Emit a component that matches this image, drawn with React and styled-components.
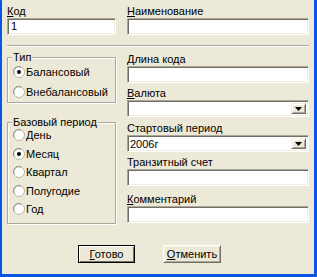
import React from "react";
import styled, { createGlobalStyle } from "styled-components";

const Global = createGlobalStyle`
  html, body { margin: 0; padding: 0; background: #ECE9D8; }
  * { box-sizing: border-box; }
`;

const Root = styled.div`
  width: 317px;
  height: 277px;
  background: #ECE9D8;
  border-left: 2px solid #0A54E6;
  border-right: 3px solid #0A54E6;
  border-bottom: 3px solid #0A54E6;
  padding: 5px 5px 0 5px;
  display: flex;
  flex-direction: column;
  font-family: "Liberation Sans", Arial, sans-serif;
  font-size: 11px;
  color: #000;
`;

const Columns = styled.div`
  display: grid;
  grid-template-columns: 109px 1fr;
  column-gap: 11px;
  align-items: start;
`;

const Column = styled.div`
  display: flex;
  flex-direction: column;
`;

const Field = styled.div`
  display: flex;
  flex-direction: column;
  margin-top: ${(p) => p.$mt || 0}px;
`;

const Label = styled.label`
  display: block;
  height: 13px;
  line-height: 13px;
  white-space: nowrap;
  u { text-decoration: underline; }
`;

const sunken = `
  border: 1px solid;
  border-color: #ACA899 #FFFFFF #FFFFFF #ACA899;
  box-shadow: inset 1px 1px 0 #716F64, inset -1px -1px 0 #F1EFE2;
  background: #FFFFFF;
`;

const TextBox = styled.div`
  ${sunken}
  height: 17px;
  padding: 0 3px;
  line-height: 15px;
  font-size: 11px;
`;

const Combo = styled.div`
  ${sunken}
  height: 17px;
  display: flex;
  align-items: stretch;
  padding: 2px;
`;

const ComboValue = styled.div`
  flex: 1;
  line-height: 13px;
  padding-left: 0px;
  font-size: 11px;
`;

const ComboButton = styled.div`
  width: 15px;
  background: #ECE9D8;
  border: 1px solid;
  border-color: #F1EFE2 #716F64 #716F64 #F1EFE2;
  box-shadow: inset 1px 1px 0 #FFFFFF, inset -1px -1px 0 #ACA899;
  display: flex;
  align-items: center;
  justify-content: center;
`;

const Separator = styled.div`
  margin-top: 10px;
  border-top: 1px solid #ACA899;
  border-bottom: 1px solid #FFFFFF;
`;

const Group = styled.div`
  position: relative;
  margin-top: ${(p) => p.$mt}px;
  height: ${(p) => p.$h}px;
  border: 1px solid #ACA899;
  box-shadow: inset 1px 1px 0 #FFFFFF, 1px 1px 0 #FFFFFF;
  padding: ${(p) => p.$pt}px 0 0 5px;
  display: flex;
  flex-direction: column;
`;

const Legend = styled.span`
  position: absolute;
  top: -7px;
  left: 4px;
  padding: 0 1px;
  line-height: 13px;
  background: #ECE9D8;
  white-space: nowrap;
`;

const RadioRow = styled.div`
  display: flex;
  align-items: center;
  height: ${(p) => p.$h}px;
  white-space: nowrap;
`;

const RadioMark = styled.svg`
  width: 12px;
  height: 12px;
  margin-right: 1px;
  flex: none;
`;

const ButtonRow = styled.div`
  display: flex;
  gap: 28px;
  margin-top: 21px;
  padding-left: 71px;
`;

const Button = styled.div`
  width: ${(p) => p.$w}px;
  height: 18px;
  background: #ECE9D8;
  display: flex;
  align-items: center;
  justify-content: center;
  border: 1px solid;
  border-color: ${(p) => (p.$default ? "#000000" : "#FFFFFF #716F64 #716F64 #FFFFFF")};
  box-shadow: ${(p) =>
    p.$default
      ? "inset 1px 1px 0 #FFFFFF, inset -1px -1px 0 #716F64"
      : "inset 1px 1px 0 #F1EFE2, inset -1px -1px 0 #ACA899"};
  font-size: 11px;
  line-height: 13px;
`;

function Radio({ checked, label, h }) {
  return (
    <RadioRow $h={h}>
      <RadioMark viewBox="0 0 12 12">
        <circle cx="6" cy="6" r="5.5" fill="#FFFFFF" stroke="#B9B6A6" />
        <path d="M1.2 8 A5 5 0 0 1 8 1.2" fill="none" stroke="#8F8C7E" strokeWidth="1" />
        {checked && <circle cx="6" cy="6" r="2" fill="#000000" />}
      </RadioMark>
      {label}
    </RadioRow>
  );
}

function Arrow() {
  return (
    <svg width="7" height="4" viewBox="0 0 7 4">
      <polygon points="0,0 7,0 3.5,4" fill="#000" />
    </svg>
  );
}

export default function App() {
  return (
    <>
      <Global />
      <Root>
        <Columns>
          <Field>
            <Label><u>К</u>од</Label>
            <TextBox>1</TextBox>
          </Field>
          <Field>
            <Label><u>Н</u>аименование</Label>
            <TextBox />
          </Field>
        </Columns>
        <Separator />
        <Columns>
          <Column>
            <Group $mt={10} $h={46} $pt={4}>
              <Legend>Тип</Legend>
              <Radio checked label="Балансовый" h={20} />
              <Radio label="Внебалансовый" h={20} />
            </Group>
            <Group $mt={19} $h={102} $pt={3}>
              <Legend>Базовый период</Legend>
              <Radio label="День" h={18.5} />
              <Radio checked label="Месяц" h={18.5} />
              <Radio label="Квартал" h={18.5} />
              <Radio label="Полугодие" h={18.5} />
              <Radio label="Год" h={18.5} />
            </Group>
          </Column>
          <Column>
            <Field $mt={6}>
              <Label><u>Д</u>лина кода</Label>
              <TextBox />
            </Field>
            <Field $mt={4}>
              <Label><u>В</u>алюта</Label>
              <Combo>
                <ComboValue />
                <ComboButton><Arrow /></ComboButton>
              </Combo>
            </Field>
            <Field $mt={5}>
              <Label>Стартовый период</Label>
              <Combo>
                <ComboValue>2006г</ComboValue>
                <ComboButton><Arrow /></ComboButton>
              </Combo>
            </Field>
            <Field $mt={4}>
              <Label>Транзитный счет</Label>
              <TextBox />
            </Field>
            <Field $mt={7}>
              <Label><u>К</u>омментарий</Label>
              <TextBox />
            </Field>
          </Column>
        </Columns>
        <ButtonRow>
          <Button $default $w={57}><span><u>Г</u>отово</span></Button>
          <Button $w={58}><span><u>О</u>тменить</span></Button>
        </ButtonRow>
      </Root>
    </>
  );
}
